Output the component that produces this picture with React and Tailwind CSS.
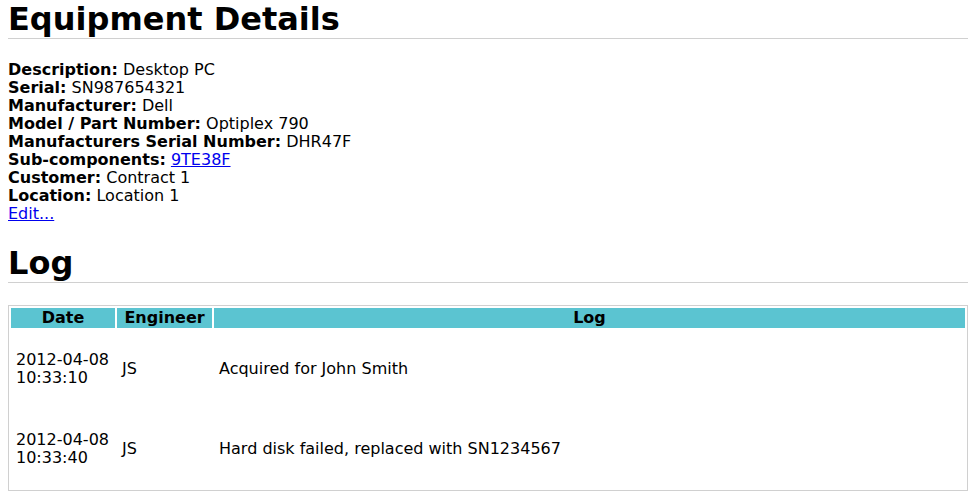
const details = [
  ['Description:', 'Desktop PC'],
  ['Serial:', 'SN987654321'],
  ['Manufacturer:', 'Dell'],
  ['Model / Part Number:', 'Optiplex 790'],
  ['Manufacturers Serial Number:', 'DHR47F'],
  ['Sub-components:', '9TE38F', true],
  ['Customer:', 'Contract 1'],
  ['Location:', 'Location 1'],
];

const logs = [
  { date: '2012-04-08', time: '10:33:10', eng: 'JS', text: 'Acquired for John Smith' },
  { date: '2012-04-08', time: '10:33:40', eng: 'JS', text: 'Hard disk failed, replaced with SN1234567' },
];

export default function App() {
  return (
    <div className="min-h-screen bg-white text-black" style={{ fontFamily: '"DejaVu Sans", Verdana, sans-serif' }}>
      <div className="ml-2 w-[960px]">
        {/* Header */}
        <h1 className="text-[32px] font-bold leading-[38px] h-[39px] border-b border-[#d0d0d0]">Equipment Details</h1>

        <div className="mt-[22px] text-[16px] leading-[18px]">
          {details.map(([label, value, link]) => (
            <div key={label}>
              <b>{label}</b>{' '}
              {link ? <a href="#" className="text-[#0000ee] underline">{value}</a> : value}
            </div>
          ))}
          <a href="#" className="text-[#0000ee] underline">Edit...</a>
        </div>

        <h1 className="mt-[21px] text-[32px] font-bold leading-[38px] h-[39px] border-b border-[#d0d0d0]">Log</h1>

        <table className="mt-[22px] w-[960px] border border-[#d0d0d0] border-separate border-spacing-[2px] text-[16px] leading-[18px]">
          <thead>
            <tr className="bg-[#5bc4d1] h-[20px]">
              <th className="w-[104px] font-bold p-0">Date</th>
              <th className="w-[95px] font-bold p-0">Engineer</th>
              <th className="font-bold p-0">Log</th>
            </tr>
          </thead>
          <tbody>
            {logs.map((l, i) => (
              <tr key={i} className="h-[78px]">
                <td className="px-[5px] text-left align-middle">{l.date}<br />{l.time}</td>
                <td className="px-[5px] text-left align-middle">{l.eng}</td>
                <td className="px-[5px] text-left align-middle">{l.text}</td>
              </tr>
            ))}
          </tbody>
        </table>
      </div>
    </div>
  );
}
